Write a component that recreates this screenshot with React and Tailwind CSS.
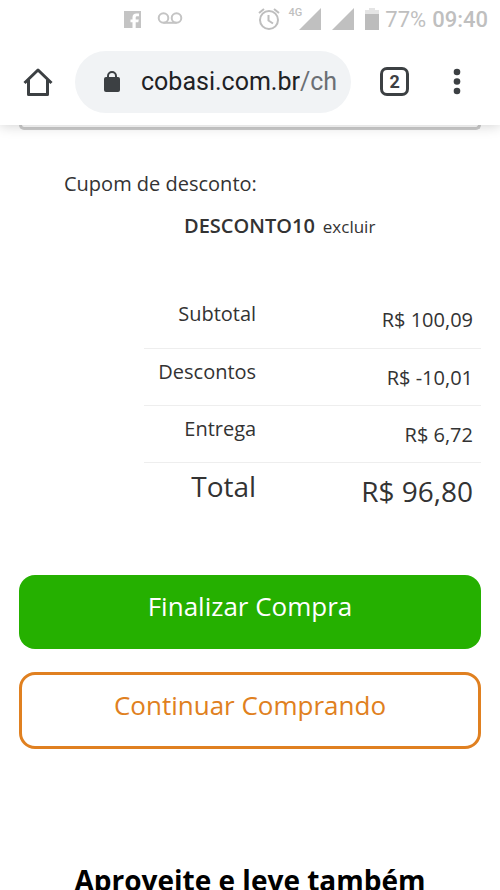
function FacebookIcon() {
  return (
    <svg viewBox="0 0 17 17" className="size-[17px]" aria-hidden="true">
      <path fill="#c4c4c4" d="M0 0h17v17H0z" />
      <path fill="#fff" d="M15 2.500h-2.500c-2.600 0-4 1.500-4 4V8.500h-2v2.700h2V17h3.200v-5.800h2.600l.5-2.700h-3.100V6.700c0-1 .4-1.500 1.400-1.500H15z" />
    </svg>
  );
}

function VoicemailIcon() {
  return (
    <svg viewBox="0 0 26 14" className="h-[14px] w-[26px]" fill="none" stroke="#c4c4c4" strokeWidth="2" aria-hidden="true">
      <circle cx="6.500" cy="6" r="4.800" />
      <circle cx="19.500" cy="6" r="4.800" />
      <path d="M6.500 10.800h13" />
    </svg>
  );
}

function AlarmIcon() {
  return (
    <svg viewBox="0 0 22 22" className="size-[22px]" fill="none" stroke="#bebebe" strokeWidth="2" aria-hidden="true">
      <circle cx="11" cy="12" r="9" />
      <path d="M10.500 7v5.500l4.500 3M1 5 6 1M21 5 16 1" />
    </svg>
  );
}

function SignalIcon() {
  return (
    <svg viewBox="0 0 22 22" className="size-[22px]" aria-hidden="true">
      <path d="M22 0v22H0z" fill="#c0c0c0" />
    </svg>
  );
}

function BatteryIcon() {
  return (
    <svg viewBox="0 0 14 22" className="h-[22px] w-[14px]" aria-hidden="true">
      <path d="M4 0h6v2h4v5H0V2h4z" fill="#e4e4e4" />
      <path d="M0 6h14v16H0z" fill="#bcbcbc" />
    </svg>
  );
}

function StatusBar() {
  return (
    <div className="flex h-[38px] items-center justify-between pl-[124px] pr-3 font-[Roboto,sans-serif] text-[#bfbfbf]">
      <div className="flex items-center gap-4">
        <FacebookIcon />
        <VoicemailIcon />
      </div>
      <div className="flex items-center">
        <AlarmIcon />
        <span className="ml-[9px] self-start pt-1 text-[11px] font-medium leading-3">4G</span>
        <span className="-ml-[3px]"><SignalIcon /></span>
        <span className="ml-[11px] mr-[11px]"><SignalIcon /></span>
        <BatteryIcon />
        <span className="ml-[6px] text-[22px]">77%</span>
        <span className="ml-[6px] text-[22px] font-medium">09:40</span>
      </div>
    </div>
  );
}

function Toolbar() {
  return (
    <div className="flex h-[87px] items-center pl-[22px] pr-9 font-[Roboto,sans-serif]">
      <button type="button" aria-label="Página inicial">
        <svg viewBox="0 0 32 32" className="size-8" fill="none" stroke="#3c4043" strokeWidth="3" strokeLinejoin="round" aria-hidden="true">
          <path d="M2.500 17 16 4l13.500 13M6.500 14v14.500h19V14" />
        </svg>
      </button>
      <button type="button" aria-label="Endereço do site" className="ml-[21px] flex h-[62px] flex-1 items-center rounded-full bg-[#f1f3f5] pl-7 pr-[14px]">
        <svg viewBox="0 0 18 22" className="h-[22px] w-[18px] shrink-0" aria-hidden="true">
          <rect x="1" y="6" width="16" height="15" rx="2" fill="#3c4043" />
          <path d="M5 7V5a4 4 0 0 1 8 0v2" fill="none" stroke="#3c4043" strokeWidth="2" />
        </svg>
        <span className="ml-5 text-[25px] text-[#202124]">
          cobasi.com.br<span className="text-[#6b6f74]">/ch</span>
        </span>
      </button>
      <button type="button" aria-label="Guias abertas" className="ml-[29px] flex size-[29px] shrink-0 items-center justify-center rounded-[7px] border-3 border-[#3c4043] text-lg font-bold leading-none text-[#3c4043]">
        2
      </button>
      <button type="button" aria-label="Mais opções" className="ml-10">
        <svg viewBox="0 0 16 28" className="h-7 w-4" fill="#3c4043" aria-hidden="true">
          <circle cx="8" cy="4" r="3.300" />
          <circle cx="8" cy="13.500" r="3.300" />
          <circle cx="8" cy="23" r="3.300" />
        </svg>
      </button>
    </div>
  );
}

const rows = [
  { label: "Subtotal", value: "R$ 100,09" },
  { label: "Descontos", value: "R$ -10,01" },
  { label: "Entrega", value: "R$ 6,72" },
];

function Summary() {
  return (
    <table className="ml-auto mt-[52px] w-[73%] table-fixed border-collapse text-[#333]">
      <tbody>
        {rows.map((row) => (
          <tr key={row.label} className="h-[57px] border-b border-[#eee] align-top text-xl leading-6">
            <th scope="row" className="w-1/3 pt-[11px] text-right font-normal">{row.label}</th>
            <td className="pr-2 pt-[17px] text-right">{row.value}</td>
          </tr>
        ))}
        <tr className="h-[57px] align-top text-[28px] leading-8">
          <th scope="row" className="w-1/3 pt-[7px] text-right font-normal">Total</th>
          <td className="pr-2 pt-3 text-right">{"R$ 96,80"}</td>
        </tr>
      </tbody>
    </table>
  );
}

export default function App() {
  return (
    <div className="flex h-dvh flex-col overflow-hidden bg-white font-['Open_Sans',sans-serif]">
      <header className="z-10 shrink-0 bg-white shadow-[0_1px_12px_rgba(0,0,0,0.18)]">
        <StatusBar />
        <Toolbar />
      </header>
      <main className="flex-1 overflow-hidden px-[19px]">
        <div className="h-[5px] rounded-b-md border-3 border-t-0 border-[#ccc]" />
        <section className="pl-[45px] pt-[42px] text-[#333]">
          <p className="text-xl leading-6">Cupom de desconto:</p>
          <p className="ml-[120px] mt-[18px] flex items-baseline gap-2 leading-6">
            <span className="text-xl font-semibold leading-6">DESCONTO10</span>
            <a href="#excluir" className="text-[17px] leading-6">excluir</a>
          </p>
        </section>
        <Summary />
        <div className="mt-[56px] flex flex-col gap-[23px] text-[26px] leading-8">
          <button type="button" className="h-[74px] rounded-2xl bg-[#25b000] pb-3 text-white">Finalizar Compra</button>
          <button type="button" className="h-[77px] rounded-2xl border-3 border-[#e08020] pb-3 text-[#e08020]">Continuar Comprando</button>
        </div>
        <h2 className="mt-[113px] whitespace-nowrap text-center text-[28px] font-bold leading-9 text-black">Aproveite e leve também</h2>
      </main>
    </div>
  );
}
